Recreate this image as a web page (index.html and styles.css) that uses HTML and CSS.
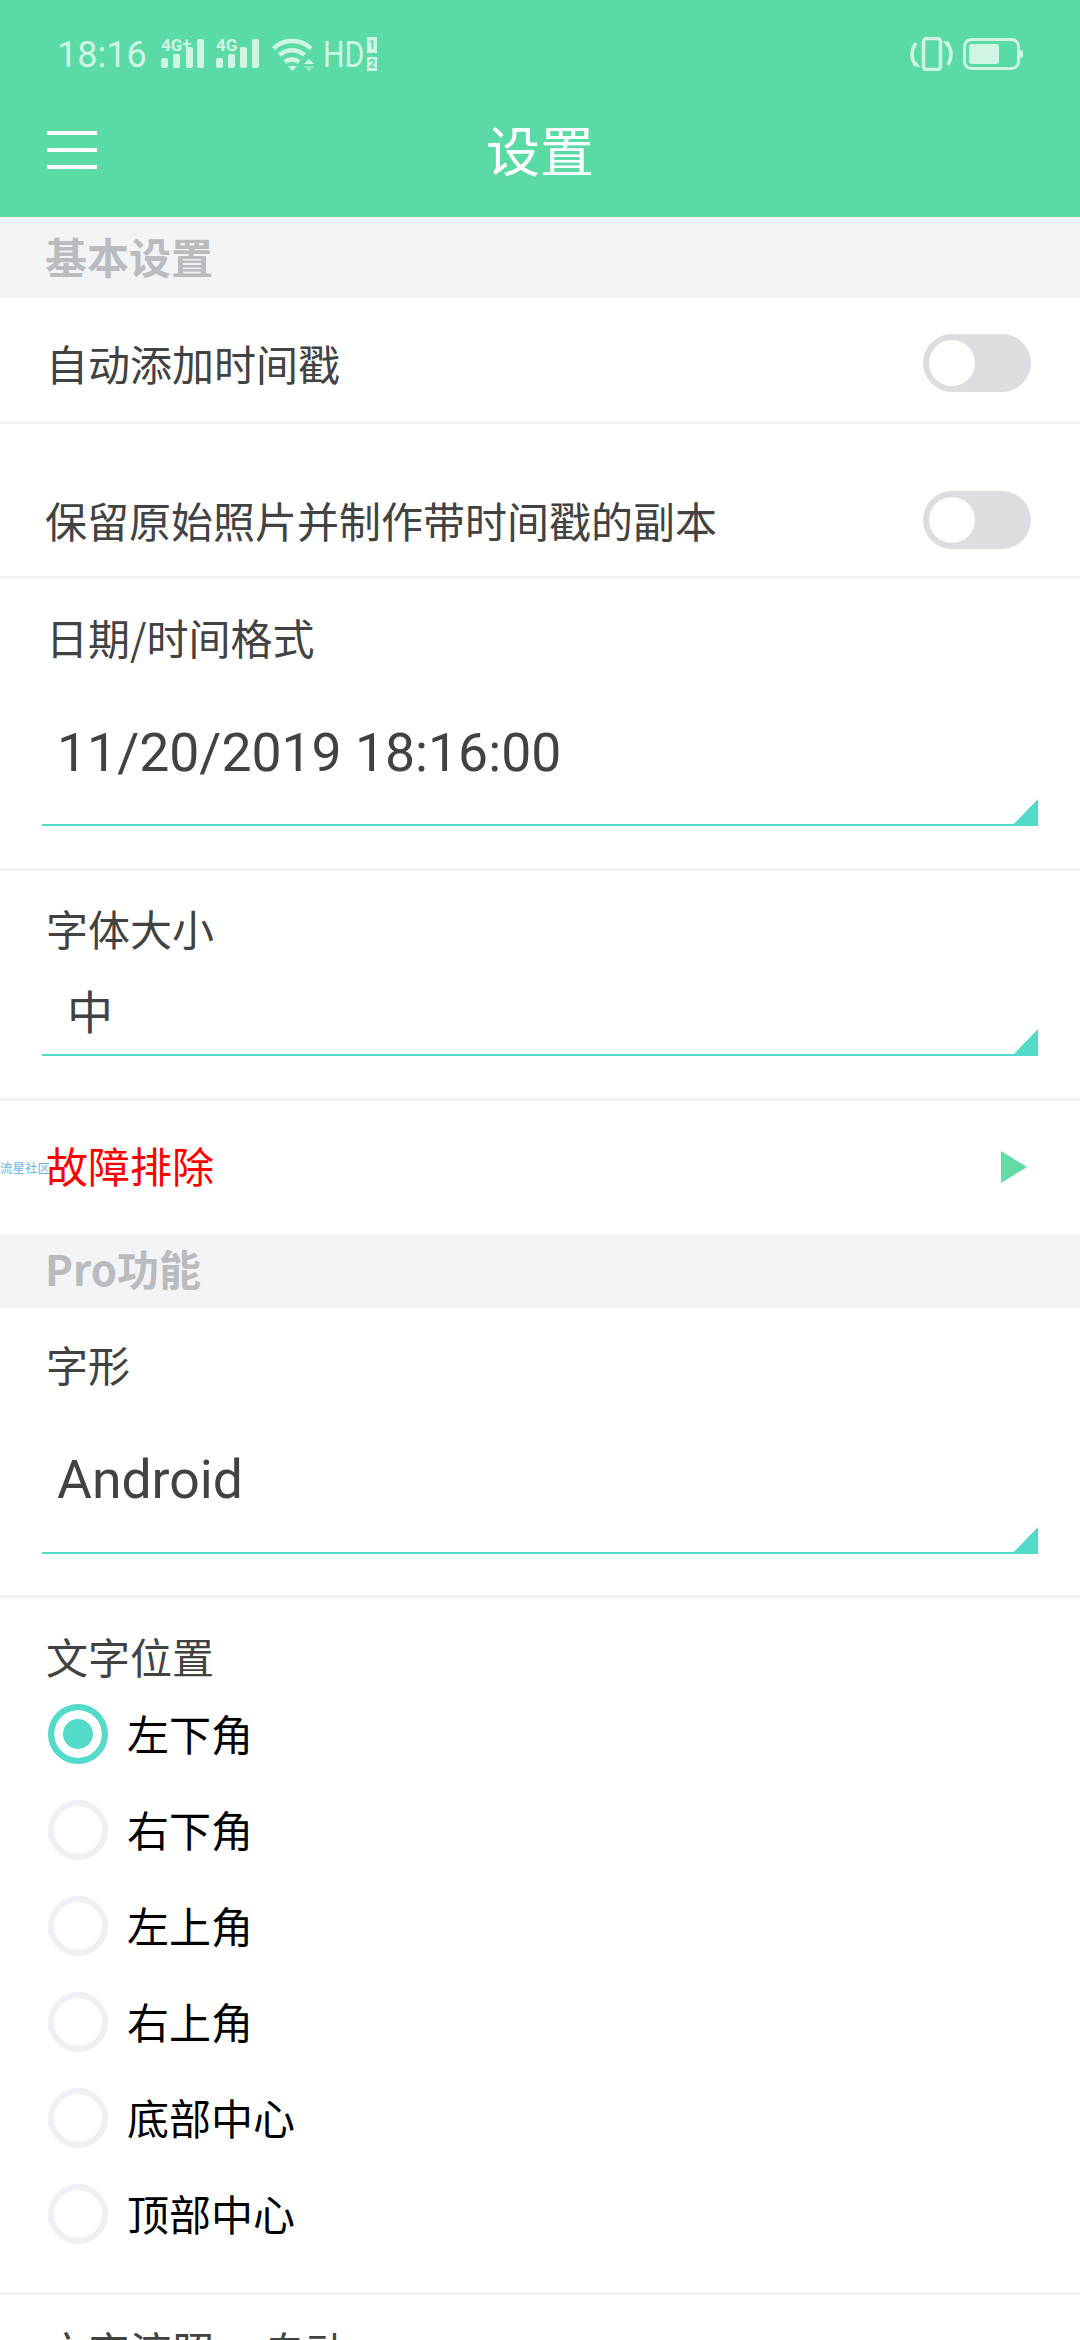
FILE: index.html
```html
<!DOCTYPE html>
<html lang="zh-CN">
<head>
<meta charset="utf-8">
<title>设置</title>
<link rel="stylesheet" href="styles.css">
</head>
<body>
<header class="appbar">
  <div class="status">
    <span class="clock">18:16</span>
    <span class="sig"><span class="net">4G</span><span class="plus">+</span><svg width="43" height="29" viewBox="0 0 43 29"><rect x="0" y="19" width="7" height="10" rx="2"/><rect x="12" y="15" width="7" height="14" rx="2"/><rect x="25" y="8" width="7" height="21" rx="2"/><rect x="36" y="0" width="7" height="29" rx="2"/></svg></span>
    <span class="sig"><span class="net">4G</span><svg width="43" height="29" viewBox="0 0 43 29"><rect x="0" y="19" width="7" height="10" rx="2"/><rect x="12" y="15" width="7" height="14" rx="2"/><rect x="24" y="8" width="7" height="21" rx="2"/><rect x="36" y="0" width="7" height="29" rx="2"/></svg></span>
    <svg class="wifi" width="43" height="35" viewBox="0 0 43 35"><path d="M2.500 11.500C12 1.500 30 1.500 40 11.500" fill="none" stroke="#cff5e3" stroke-width="4.500"/><path d="M8.500 18C16 11.500 26 11.500 33.500 18" fill="none" stroke="#cff5e3" stroke-width="4.500"/><path d="M14 25C18 21.500 24 21.500 28 25" fill="none" stroke="#cff5e3" stroke-width="4.500"/><path d="M17 29h9l-4.500 5z" fill="#cff5e3"/><path d="M33 27l5-5 5 5z" fill="#cff5e3"/><path d="M33 29h10l-5 6z" fill="#cff5e3" opacity=".45"/></svg>
    <span class="hd">HD</span>
    <span class="sims"><span class="sim">1</span><span class="sim sim-b">2</span></span>
    <span class="spacer"></span>
    <svg width="43" height="34" viewBox="0 0 43 34"><rect x="13.500" y="1.500" width="17" height="31" rx="3" fill="none" stroke="#cff5e3" stroke-width="3.500"/><path d="M6 6C1 13 1 21 5 28M37 6C42 13 42 21 38 28" fill="none" stroke="#cff5e3" stroke-width="3.500"/><path d="M3 29l7 1-4-6zM40 5l-7-1 4 6z" fill="#cff5e3"/></svg>
    <svg class="batt" width="60" height="32" viewBox="0 0 60 32"><rect x="1.500" y="1.500" width="54" height="29" rx="7" fill="none" stroke="#cff5e3" stroke-width="3"/><rect x="6" y="6" width="30" height="20" rx="3" fill="#cff5e3"/><rect x="56" y="12" width="4" height="8" rx="2" fill="#cff5e3"/></svg>
  </div>
  <div class="toolbar">
    <span class="menu"><i></i><i></i><i></i></span>
    <h1 class="title">设置</h1>
  </div>
</header>

<section class="band band-a">基本设置</section>

<div class="row row-switch first"><span class="label">自动添加时间戳</span><span class="switch"><i></i></span></div>
<div class="row row-switch second"><span class="label">保留原始照片并制作带时间戳的副本</span><span class="switch"><i></i></span></div>

<div class="block date">
  <div class="label">日期/时间格式</div>
  <div class="select big">11/20/2019 18:16:00</div>
</div>
<div class="block size">
  <div class="label">字体大小</div>
  <div class="select mid">中</div>
</div>
<div class="row trouble">
  <span class="wm">流星社区</span><span class="red">故障排除</span>
  <span class="play"></span>
</div>

<section class="band band-b">Pro功能</section>

<div class="block glyph">
  <div class="label">字形</div>
  <div class="select big">Android</div>
</div>

<div class="block pos">
  <div class="label">文字位置</div>
  <div class="radios">
    <div class="radio on"><i></i><span>左下角</span></div>
    <div class="radio"><i></i><span>右下角</span></div>
    <div class="radio"><i></i><span>左上角</span></div>
    <div class="radio"><i></i><span>右上角</span></div>
    <div class="radio"><i></i><span>底部中心</span></div>
    <div class="radio"><i></i><span>顶部中心</span></div>
  </div>
</div>
<div class="last label">文字渲照 - 自动</div>
</body>
</html>
```
FILE: styles.css
```css
* { box-sizing: border-box; }
html, body { margin: 0; padding: 0; }
body { width: 1080px; height: 2340px; overflow: hidden; background: #fff; font-family: "Noto Sans CJK SC", Roboto, sans-serif; color: #424242; }
.appbar { height: 217px; background: #5adba6; }
.status { height: 107px; padding: 37px 57px 0 57px; display: flex; align-items: flex-start; color: #cff5e3; }
.clock { font: 36px/36px Roboto, sans-serif; width: 104px; }
.sig { position: relative; width: 43px; height: 31px; display: block; margin-right: 12px; padding-top: 2px; }
.sig svg { position: absolute; left: 0; top: 2px; fill: #cff5e3; }
.net { position: absolute; left: 0; top: 1px; font: 700 17px/14px Roboto, sans-serif; background: transparent; }
.plus { position: absolute; left: 21px; top: 0; font: 700 17px/14px Roboto, sans-serif; }
.wifi { margin: 0 9px 0 0; }
.hd { font: 36px/36px Roboto, sans-serif; width: 44px; transform: scaleX(.84); transform-origin: left center; }
.sims { display: flex; flex-direction: column; gap: 4px; margin: 0; }
.sim { width: 10px; height: 16px; background: #cff5e3; color: #5adba6; font: 700 12px/16px Roboto, sans-serif; text-align: center; }
.sim-b { height: 14px; line-height: 14px; }
.spacer { flex: 1; }
.batt { margin: 1px 0 0 10px; }
.toolbar { height: 110px; position: relative; display: flex; align-items: center; justify-content: center; }
.menu { position: absolute; left: 47px; top: 24px; width: 50px; display: flex; flex-direction: column; gap: 13px; }
.menu i { height: 4px; background: #fff; display: block; }
.title { margin: 0; font-size: 54px; font-weight: 400; color: #fff; line-height: 70px; position: relative; top: -13px; }
.band { background: #f3f4f6; color: #b9bbbf; font-weight: 700; font-size: 42px; padding: 0 0 5px 45px; display: flex; align-items: center; }
.band-a { height: 81px; }
.band-b { height: 74px; padding-bottom: 7px; }
.label { font-size: 42px; line-height: 56px; color: #424242; }
.row { display: flex; align-items: center; border-bottom: 3px solid #f2f2f4; padding: 0 49px 0 46px; }
.row-switch { justify-content: space-between; }
.first { height: 126px; padding-top: 7px; }
.second { height: 155px; padding-top: 39px; padding-left: 45px; }
.switch { width: 108px; height: 58px; background: #dcdde0; border-radius: 29px; padding: 6px; display: block; }
.switch i { display: block; width: 46px; height: 46px; background: #fff; border-radius: 50%; }
.block { border-bottom: 3px solid #f2f2f4; padding-left: 46px; padding-right: 42px; }
.select { position: relative; border-bottom: 2px solid #52dbc8; margin-left: -4px; padding-left: 15px; color: #424242; font-family: Roboto, "Noto Sans CJK SC", sans-serif; }
.select::after { content: ""; position: absolute; right: 0; bottom: -2px; width: 26px; height: 27px; background: #52dbc8; clip-path: polygon(100% 0, 100% 100%, 0 100%); }
.big { font-size: 53.500px; line-height: 60px; }
.mid { font-size: 46px; height: 100px; padding: 25px 0 0 25px; line-height: 56px; font-family: "Noto Sans CJK SC", sans-serif; }
.date { height: 292px; padding-top: 30px; }
.date .select { height: 161px; padding-top: 58px; }
.size { height: 230px; padding-top: 29px; }
.trouble { height: 133px; padding: 0 0 6px; position: relative; border-bottom: 0; }
.wm { font-size: 12.500px; color: #69b1ec; width: 46px; white-space: nowrap; margin-top: 6px; }
.red { color: #f00; font-size: 42px; }
.play { position: absolute; left: 1001px; top: 50px; border-left: 26px solid #62dca4; border-top: 16px solid transparent; border-bottom: 16px solid transparent; }
.glyph { height: 290px; padding-top: 28px; }
.glyph .select { height: 162px; padding-top: 58px; }
.pos { height: 697px; padding-top: 30px; }
.radios { display: flex; flex-direction: column; margin-top: 2px; }
.radio { height: 96px; display: flex; align-items: center; gap: 19px; color: #000; font-size: 42px; margin-left: 2px; }
.radio span { position: relative; top: -2px; }
.radio i { width: 60px; height: 60px; border-radius: 50%; border: 6px solid #efeff5; display: block; }
.radio.on i { border-color: #52dbc8; background: #52dbc8; box-shadow: inset 0 0 0 9px #fff; }
.last { padding: 27px 0 0 46px; word-spacing: 8px; }
```
